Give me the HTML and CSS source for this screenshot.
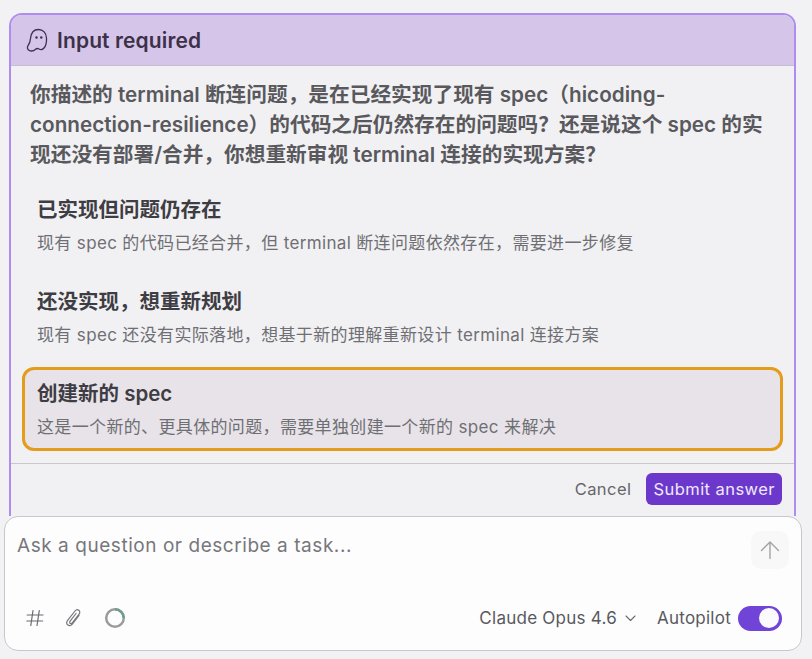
FILE: index.html
```html
<!DOCTYPE html>
<html lang="zh">
<head>
<meta charset="utf-8">
<title>Input required</title>
<link rel="stylesheet" href="styles.css">
</head>
<body>
<div class="page">
  <section class="card">
    <header class="card-head">
      <svg class="ghost" width="22" height="25" viewBox="0 0 22 25" fill="none" stroke="#3d2f52" stroke-width="1.300" stroke-linecap="round" stroke-linejoin="round">
        <path d="M3.500 22.500c-2-.7-2.700-2.900-1.500-4.800 1.300-1.800 2.200-3.700 2.500-7.200C5 5 8 1.500 12.500 1.500c4.600 0 7.800 3.500 8 8.500.2 4-.3 7.500-2.500 10-1.600 1.800-3.500 1.900-5 1-1.200-.7-2.200-.8-3.400.3-1.600 1.500-3.900 2.200-6.600 1.200z"/>
        <circle cx="10.500" cy="9.500" r=".6" fill="#3d2f52"/>
        <circle cx="15.300" cy="9.500" r=".6" fill="#3d2f52"/>
      </svg>
      <span class="head-title">Input required</span>
    </header>
    <div class="card-body">
      <p class="question">你描述的 terminal 断连问题，是在已经实现了现有 spec（hicoding-connection-resilience）的代码之后仍然存在的问题吗？还是说这个 spec 的实现还没有部署/合并，你想重新审视 terminal 连接的实现方案？</p>
      <div class="option">
        <div class="opt-title">已实现但问题仍存在</div>
        <div class="opt-desc">现有 spec 的代码已经合并，但 terminal 断连问题依然存在，需要进一步修复</div>
      </div>
      <div class="option">
        <div class="opt-title">还没实现，想重新规划</div>
        <div class="opt-desc">现有 spec 还没有实际落地，想基于新的理解重新设计 terminal 连接方案</div>
      </div>
      <div class="option selected">
        <div class="opt-title">创建新的 spec</div>
        <div class="opt-desc">这是一个新的、更具体的问题，需要单独创建一个新的 spec 来解决</div>
      </div>
    </div>
    <footer class="card-foot">
      <span class="cancel">Cancel</span>
      <span class="submit">Submit answer</span>
    </footer>
  </section>
  <section class="composer">
    <div class="input-row">
      <span class="placeholder">Ask a question or describe a task...</span>
      <span class="send">
        <svg width="20" height="20" viewBox="0 0 20 20" fill="none" stroke="#a3a3a6" stroke-width="1.400" stroke-linecap="round" stroke-linejoin="round"><path d="M10 18.500V2M1.500 10.500 10 2l8.500 8.500"/></svg>
      </span>
    </div>
    <div class="tool-row">
      <div class="tools">
        <svg class="tool-hash" width="18" height="18" viewBox="0 0 18 18" fill="none" stroke="#6a6a6e" stroke-width="1.200" stroke-linecap="round"><path d="M7 1.500 4.800 16.500M13.300 1.500 11 16.500M1.200 6h15.800M.8 12h15.800"/></svg>
        <svg class="tool-clip" width="18" height="20" viewBox="0 0 18 20" fill="none" stroke="#77777b" stroke-width="1.200" stroke-linecap="round" stroke-linejoin="round"><path d="M14 7.500 7.500 16c-1.300 1.700-3.300 2-4.600 1-1.400-1.100-1.500-3-.3-4.600L10 3c1-1.300 2.600-1.600 3.800-.7 1.200.9 1.300 2.500.3 3.800l-6.800 8.800c-.6.800-1.500 1-2.100.5-.7-.5-.7-1.400-.1-2.200L11 5.500"/></svg>
        <svg class="tool-ring" width="22" height="22" viewBox="0 0 22 22" fill="none" stroke-width="2.500"><circle cx="11" cy="11" r="8.800" stroke="#9a9c9c"/><path d="M11 2.200A8.800 8.800 0 0 1 19.800 11" stroke="#6f9c8c"/></svg>
      </div>
      <div class="controls">
        <span class="model">Claude Opus 4.6</span>
        <svg class="chev" width="11" height="7" viewBox="0 0 11 7" fill="none" stroke="#6a6a6e" stroke-width="1.100" stroke-linecap="round" stroke-linejoin="round"><path d="M1 1l4.500 4.500L10 1"/></svg>
        <span class="auto">Autopilot</span>
        <span class="toggle"><span class="knob"></span></span>
      </div>
    </div>
  </section>
</div>
</body>
</html>
```
FILE: styles.css
```css
* { box-sizing: border-box; }
html, body { margin: 0; height: 100%; }
body {
  background: #f2f2f4;
  font-family: Inter, "Noto Sans CJK SC", sans-serif;
  overflow: hidden;
}
.page {
  width: 812px;
  height: 659px;
  padding: 13px 9px 0 3px;
  display: flex;
  flex-direction: column;
}
.card {
  margin: 0 0 0 6px;
  width: 787px;
  height: 503px;
  border: 2px solid #ae8cf0;
  border-bottom: none;
  border-radius: 13px 13px 0 0;
  background: #f1f1f3;
  display: flex;
  flex-direction: column;
  flex: none;
}
.card-head {
  height: 51px;
  flex: none;
  display: flex;
  align-items: center;
  gap: 9px;
  padding: 0 0 0 15px;
  background: #d5c6e9;
  border-bottom: 1px solid #c6bdd2;
  border-radius: 11px 11px 0 0;
}
.head-title {
  font-size: 21px;
  font-weight: 600;
  color: #3d3049;
  letter-spacing: .12px;
}
.card-body {
  flex: none;
  height: 398px;
  padding: 14px 11px 0;
  border-bottom: 1px solid #c8c8cb;
}
.question {
  margin: 0 0 0 8px;
  width: 745px;
  font-size: 20.700px;
  line-height: 30px;
  font-weight: 600;
  color: #59595d;
}
.option {
  height: 84px;
  padding: 10px 12px;
  margin-top: 8px;
  border: 3px solid transparent;
  border-radius: 12px;
}
.option:first-of-type { margin-top: 13px; }
.opt-title {
  font-size: 20.500px;
  line-height: 28px;
  font-weight: 600;
  color: #3f3d44;
}
.opt-desc {
  margin-top: 7px;
  font-size: 17px;
  line-height: 24px;
  color: #6f6f73;
  letter-spacing: .35px;
}
.selected {
  border-color: #e49c1d;
  background: #e7e3e9;
}
.card-foot {
  flex: 1;
  display: flex;
  justify-content: flex-end;
  align-items: center;
  gap: 15px;
  padding: 0 12px 2px 0;
}
.cancel {
  font-size: 16.500px;
  color: #66666a;
  letter-spacing: .45px;
}
.submit {
  height: 32px;
  padding: 0 7px;
  display: flex;
  align-items: center;
  background: #6c38cc;
  color: #efe8fb;
  border-radius: 6px;
  font-size: 16.500px;
  letter-spacing: .45px;
}
.composer {
  flex: none;
  width: 798px;
  height: 135px;
  background: #fdfdfe;
  border: 1.500px solid #c8c8ca;
  border-radius: 14px;
  display: flex;
  flex-direction: column;
  justify-content: space-between;
  padding: 0 19px 0 12px;
  margin-left: 1px;
}
.input-row {
  display: flex;
  justify-content: space-between;
  align-items: flex-start;
  padding-top: 15px;
}
.placeholder {
  font-size: 19px;
  line-height: 28px;
  color: #77777b;
  letter-spacing: .55px;
}
.send {
  width: 38px;
  height: 38px;
  margin: -1px -7px 0 0;
  border-radius: 10px;
  background: #f8f8f9;
  display: flex;
  align-items: center;
  justify-content: center;
}
.tool-row {
  display: flex;
  justify-content: space-between;
  align-items: center;
  height: 30px;
  margin-bottom: 17px;
}
.tools {
  display: flex;
  align-items: center;
  gap: 21px;
  padding-left: 9px;
}
.controls {
  display: flex;
  align-items: center;
}
.model {
  font-size: 17px;
  color: #59595d;
  letter-spacing: .25px;
}
.chev { margin: 0 21px 0 8px; }
.auto {
  font-size: 17px;
  color: #59595d;
  letter-spacing: .25px;
  margin-right: 7px;
}
.toggle {
  width: 44px;
  height: 25px;
  border-radius: 13px;
  background: #7144d8;
  display: flex;
  align-items: center;
  justify-content: flex-end;
  padding-right: 3px;
}
.knob {
  width: 20px;
  height: 20px;
  border-radius: 50%;
  background: #fbfafd;
}
```
